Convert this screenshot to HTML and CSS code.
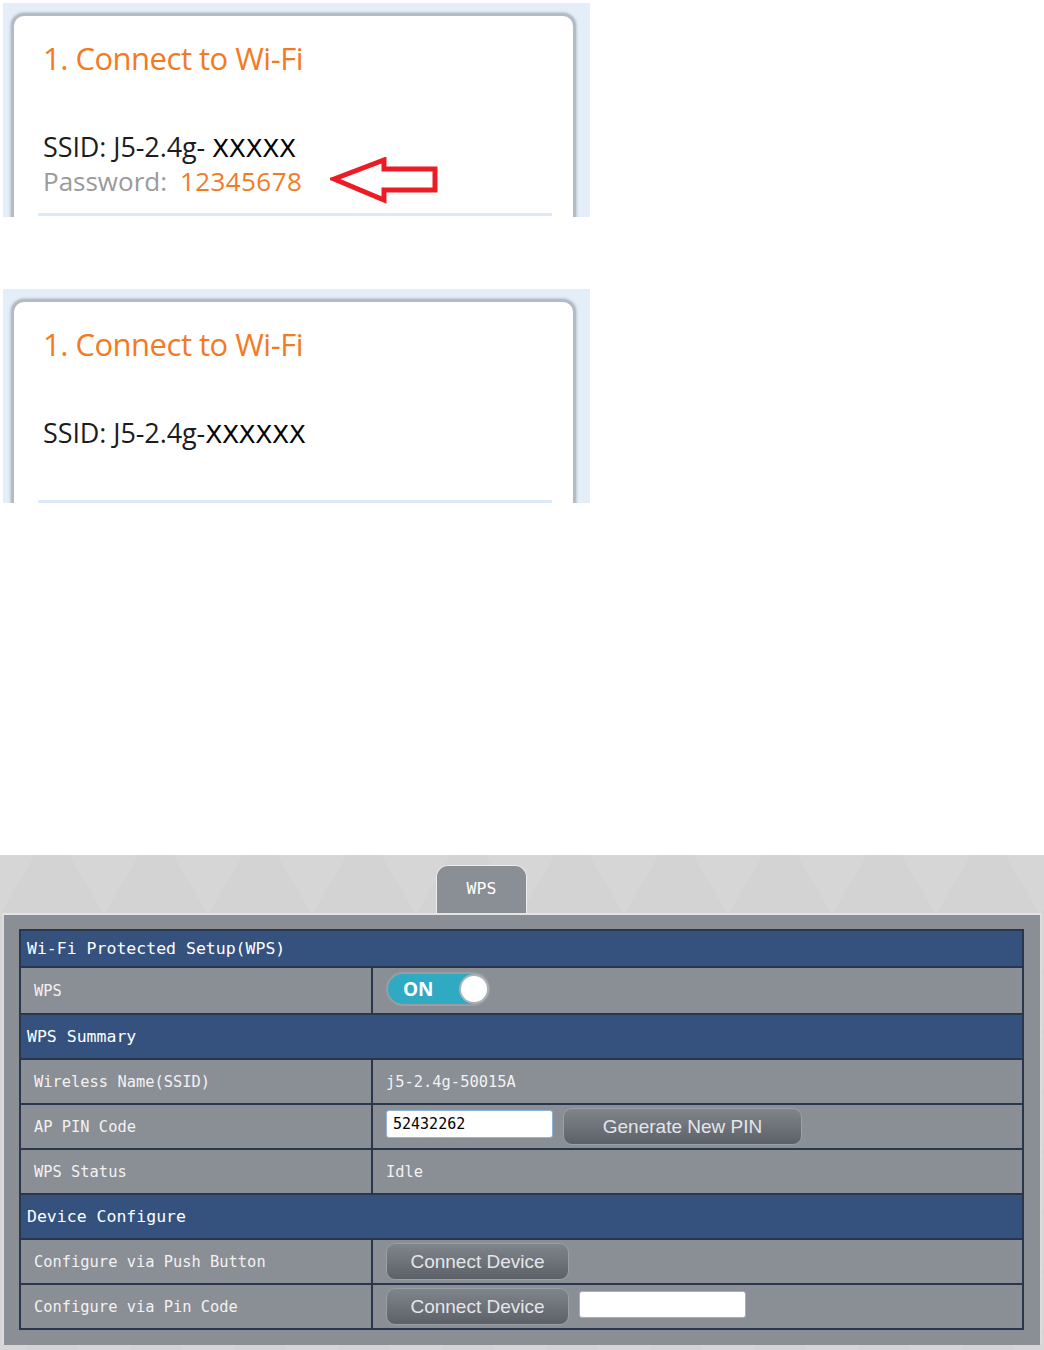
FILE: index.html
```html
<!DOCTYPE html>
<html lang="en">
<head>
    <meta charset="UTF-8">
    <meta name="viewport" content="width=device-width, initial-scale=1.0">
    <title>Connect to Wi-Fi / WPS</title>
    <link rel="stylesheet" href="styles.css">
</head>
<body>
    <!-- Screenshot 1: SSID and password -->
    <div class="shot">
        <div class="card">
            <h2 class="card-title">1. Connect to Wi-Fi</h2>
            <div class="card-lines">
                <p class="ssid">SSID: J5-2.4g- <span class="mask">XXXXX</span></p>
                <p class="password">Password: <span class="pass-value">12345678</span>
                    <svg class="arrow" width="112" height="48" viewBox="0 0 112 48">
                        <polygon points="4,22 54,3 54,12 105,12 105,33 54,33 54,43" fill="none" stroke="#ed1c24" stroke-width="5"/>
                    </svg>
                </p>
            </div>
            <div class="card-rule"></div>
        </div>
    </div>

    <!-- Screenshot 2: SSID only -->
    <div class="shot shot-second">
        <div class="card">
            <h2 class="card-title">1. Connect to Wi-Fi</h2>
            <div class="card-lines">
                <p class="ssid">SSID: J5-2.4g-<span class="mask">XXXXXX</span></p>
            </div>
            <div class="card-rule card-rule-low"></div>
        </div>
    </div>

    <!-- Router admin page: WPS -->
    <div class="router">
        <div class="tabs">
            <div class="tab">WPS</div>
        </div>
        <div class="panel">
            <table class="wps-table">
                <tr class="section">
                    <td colspan="2">Wi-Fi Protected Setup(WPS)</td>
                </tr>
                <tr class="row row-toggle">
                    <td class="label">WPS</td>
                    <td class="value">
                        <div class="toggle">
                            <span class="toggle-text">ON</span>
                            <span class="knob"></span>
                        </div>
                    </td>
                </tr>
                <tr class="section">
                    <td colspan="2">WPS Summary</td>
                </tr>
                <tr class="row">
                    <td class="label">Wireless Name(SSID)</td>
                    <td class="value">j5-2.4g-50015A</td>
                </tr>
                <tr class="row">
                    <td class="label">AP PIN Code</td>
                    <td class="value">
                        <div class="controls">
                            <input type="text" class="field" value="52432262">
                            <button class="btn btn-wide">Generate New PIN</button>
                        </div>
                    </td>
                </tr>
                <tr class="row">
                    <td class="label">WPS Status</td>
                    <td class="value">Idle</td>
                </tr>
                <tr class="section">
                    <td colspan="2">Device Configure</td>
                </tr>
                <tr class="row">
                    <td class="label">Configure via Push Button</td>
                    <td class="value">
                        <button class="btn">Connect Device</button>
                    </td>
                </tr>
                <tr class="row">
                    <td class="label">Configure via Pin Code</td>
                    <td class="value">
                        <div class="controls">
                            <button class="btn">Connect Device</button>
                            <input type="text" class="field field-pin" value="">
                        </div>
                    </td>
                </tr>
            </table>
        </div>
    </div>
</body>
</html>
```

FILE: styles.css
```css
body {
    margin: 0;
    background-color: #fff;
    font-family: "Open Sans", Arial, sans-serif;
}

p, h2 {
    margin: 0;
}

/* top screenshots */
.shot {
    width: 587px;
    height: 214px;
    margin: 3px 0 0 3px;
    background-color: #e3eef8;
    overflow: hidden;
    padding-top: 11px;
    box-sizing: border-box;
}

.shot-second {
    margin-top: 72px;
}

.card {
    margin-left: 9px;
    width: 563px;
    height: 260px;
    box-sizing: border-box;
    background-color: #fff;
    border: 2px solid #b3bcc5;
    border-radius: 12px;
    box-shadow: 0 0 3px 1px #9aa4ad;
    padding: 22px 0 0 29px;
}

.card-title {
    font-size: 31px;
    font-weight: normal;
    color: #f57a1f;
    letter-spacing: -0.5px;
    line-height: 40px;
}

.card-lines {
    margin-top: 51px;
    line-height: 35px;
}

.ssid {
    color: #1c1c1c;
    font-size: 27px;
    letter-spacing: -0.1px;
}

.mask {
    font-family: "DejaVu Sans", Verdana, sans-serif;
    font-size: 25px;
    letter-spacing: -0.4px;
    color: #000;
}

.password {
    color: #9a9a9a;
    display: flex;
    align-items: center;
    height: 36px;
    margin-top: -3px;
    font-size: 26px;
    letter-spacing: 0;
}

.pass-value {
    color: #f57a1f;
    margin-left: 13px;
    letter-spacing: 0.4px;
}

.arrow {
    margin-left: 28px;
}

.card-rule {
    margin: 14px 0 0 -5px;
    width: 514px;
    height: 3px;
    background-color: #dde9f6;
}

.card-rule-low {
    margin-top: 48px;
}

/* router page */
.router {
    margin-top: 352px;
    height: 495px;
    background-color: #d3d3d3;
    background-image:
        linear-gradient(120deg, rgba(255,255,255,0.07) 25%, transparent 25%),
        linear-gradient(-120deg, rgba(255,255,255,0.07) 25%, transparent 25%);
    background-size: 104px 60px;
    padding-top: 10px;
    box-sizing: border-box;
}

.tabs {
    height: 48px;
    padding-left: 436px;
}

.tab {
    width: 89px;
    height: 48px;
    background-color: #8a8e95;
    border: 1px solid #ececec;
    border-bottom: none;
    border-radius: 12px 12px 0 0;
    color: #fff;
    text-align: center;
    font-family: "DejaVu Sans Mono", monospace;
    font-size: 16.5px;
    line-height: 46px;
}

.panel {
    margin: 0 2px;
    background-color: #8a8e95;
    border-top: 2px solid #e4e4e4;
    border-left: 2px solid #dcdcdc;
    border-right: 2px solid #dcdcdc;
    padding: 14px 16px 15px 15px;
    height: 432px;
    box-sizing: border-box;
}

.wps-table {
    width: 100%;
    border-collapse: collapse;
    border: 2px solid #1d2738;
    font-family: "DejaVu Sans Mono", monospace;
    color: #f2f2f2;
}

.wps-table td {
    border: 2px solid #2a364b;
    padding: 0;
}

.section td {
    background-color: #35527f;
    height: 43px;
    padding-left: 6px;
    font-size: 16.5px;
    color: #fff;
}

.wps-table tr.section:first-child td {
    height: 35px;
}

.row td {
    height: 43px;
}

.row-toggle td {
    height: 45px;
}

.label {
    width: 337px;
    padding-left: 13px !important;
    font-size: 15.4px;
}

.value {
    padding-left: 13px !important;
    font-size: 15.4px;
}

.toggle {
    position: relative;
    width: 100px;
    height: 30px;
    margin: -4px 0 0 2px;
    border-radius: 16px;
    background-color: #30a9c3;
    box-shadow: 0 0 0 2px #9a9ea4;
}

.toggle-text {
    position: absolute;
    left: 15px;
    top: 3px;
    font-family: "Open Sans", Arial, sans-serif;
    font-weight: bold;
    font-size: 19px;
    line-height: 24px;
    color: #fff;
}

.knob {
    position: absolute;
    right: 1px;
    top: 2px;
    width: 26px;
    height: 26px;
    border-radius: 50%;
    background-color: #fff;
    box-shadow: 0 0 0 2px #a9b3b8;
}

.controls {
    display: flex;
    align-items: flex-start;
    gap: 10px;
}

.field {
    width: 167px;
    height: 28px;
    margin-top: 2px;
    box-sizing: border-box;
    border: 1px solid #8fb4dc;
    border-radius: 3px;
    padding: 0 6px;
    font-family: "DejaVu Sans Mono", monospace;
    font-size: 15px;
    color: #000;
    background-color: #fff;
}

.field-pin {
    height: 27px;
    margin-top: 3px;
}

.btn {
    width: 183px;
    height: 37px;
    border: 1px solid #9ba0a6;
    border-radius: 9px;
    background: linear-gradient(#80848b, #5c6067);
    color: #e4e6ea;
    font-family: "Liberation Sans", Arial, sans-serif;
    font-size: 19px;
    padding: 0;
}

.btn-wide {
    width: 239px;
}
```
